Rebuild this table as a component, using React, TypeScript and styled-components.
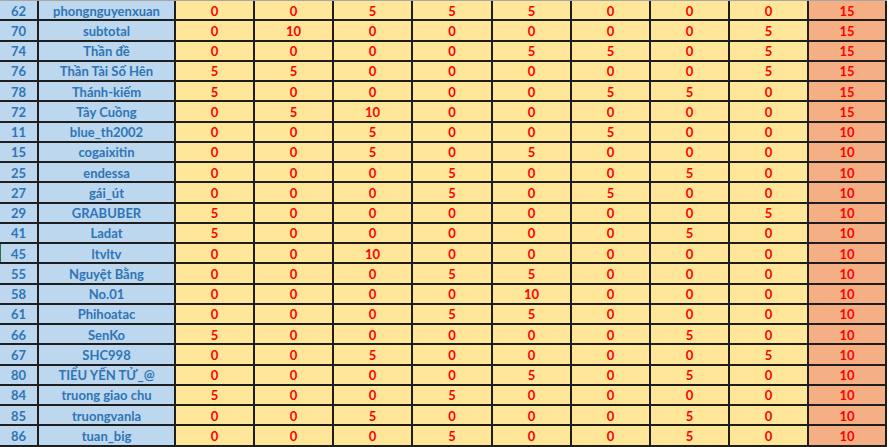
import React from 'react';
import styled, { createGlobalStyle } from 'styled-components';

const GlobalStyle = createGlobalStyle`
  html, body {
    margin: 0;
    padding: 0;
    background: #ffffff;
  }
  body {
    font-family: Lato, "Liberation Sans", sans-serif;
  }
`;

type Row = [number, string, number[], number, boolean?];

const rows: Row[] = [
  [62, 'phongnguyenxuan', [0, 0, 5, 5, 5, 0, 0, 0], 15],
  [70, 'subtotal', [0, 10, 0, 0, 0, 0, 0, 5], 15],
  [74, 'Thần đề', [0, 0, 0, 0, 5, 5, 0, 5], 15],
  [76, 'Thần Tài Số Hên', [5, 5, 0, 0, 0, 0, 0, 5], 15],
  [78, 'Thánh-kiếm', [5, 0, 0, 0, 0, 5, 5, 0], 15],
  [72, 'Tây Cuồng', [0, 5, 10, 0, 0, 0, 0, 0], 15],
  [11, 'blue_th2002', [0, 0, 5, 0, 0, 5, 0, 0], 10],
  [15, 'cogaixitin', [0, 0, 5, 0, 5, 0, 0, 0], 10],
  [25, 'endessa', [0, 0, 0, 5, 0, 0, 5, 0], 10],
  [27, 'gái_út', [0, 0, 0, 5, 0, 5, 0, 0], 10],
  [29, 'GRABUBER', [5, 0, 0, 0, 0, 0, 0, 5], 10],
  [41, 'Ladat', [5, 0, 0, 0, 0, 0, 5, 0], 10],
  [45, 'ltvltv', [0, 0, 10, 0, 0, 0, 0, 0], 10, true],
  [55, 'Nguyệt Bằng', [0, 0, 0, 5, 5, 0, 0, 0], 10],
  [58, 'No.01', [0, 0, 0, 0, 10, 0, 0, 0], 10],
  [61, 'Phihoatac', [0, 0, 0, 5, 5, 0, 0, 0], 10],
  [66, 'SenKo', [5, 0, 0, 0, 0, 0, 5, 0], 10],
  [67, 'SHC998', [0, 0, 5, 0, 0, 0, 0, 5], 10],
  [80, 'TIỂU YẾN TỬ_@', [0, 0, 0, 0, 5, 0, 5, 0], 10],
  [84, 'truong giao chu', [5, 0, 0, 5, 0, 0, 0, 0], 10],
  [85, 'truongvanla', [0, 0, 5, 0, 0, 0, 5, 0], 10],
  [86, 'tuan_big', [0, 0, 0, 5, 0, 0, 5, 0], 10],
];

const Sheet = styled.div`
  display: grid;
  grid-template-columns: 39px 137px 79px 79px 79px 80px 79px 79px 79px 79px 78px;
  grid-auto-rows: 20.25px;
  width: 887px;
  border-top: 1px solid #a6a6a6;
`;

const Cell = styled.div<{ $kind: 'id' | 'name' | 'score' | 'total' }>`
  position: relative;
  box-sizing: border-box;
  display: flex;
  align-items: center;
  justify-content: center;
  border-right: 2px solid #1e1e1e;
  border-bottom: 2px solid #1e1e1e;
  font-size: 13px;
  font-weight: 700;
  white-space: nowrap;
  padding-top: 1px;
  background: ${p =>
    p.$kind === 'id' || p.$kind === 'name' ? '#bdd7ee' : p.$kind === 'total' ? '#f4b084' : '#ffe699'};
  color: ${p => (p.$kind === 'id' || p.$kind === 'name' ? '#2f75b5' : '#ff0000')};
`;

const IdCell = styled(Cell)<{ $flag?: boolean }>`
  &::before {
    content: '';
    display: ${p => (p.$flag ? 'block' : 'none')};
    position: absolute;
    left: 0;
    top: 0;
    bottom: 0;
    width: 1px;
    background: #217346;
  }
`;

export default function App() {
  return (
    <>
      <GlobalStyle />
      <Sheet>
        {rows.map(([id, name, scores, total, flag]) => (
          <React.Fragment key={id}>
            <IdCell $kind="id" $flag={flag}>{id}</IdCell>
            <Cell $kind="name">{name}</Cell>
            {scores.map((s, i) => (
              <Cell key={i} $kind="score">{s}</Cell>
            ))}
            <Cell $kind="total">{total}</Cell>
          </React.Fragment>
        ))}
      </Sheet>
    </>
  );
}
